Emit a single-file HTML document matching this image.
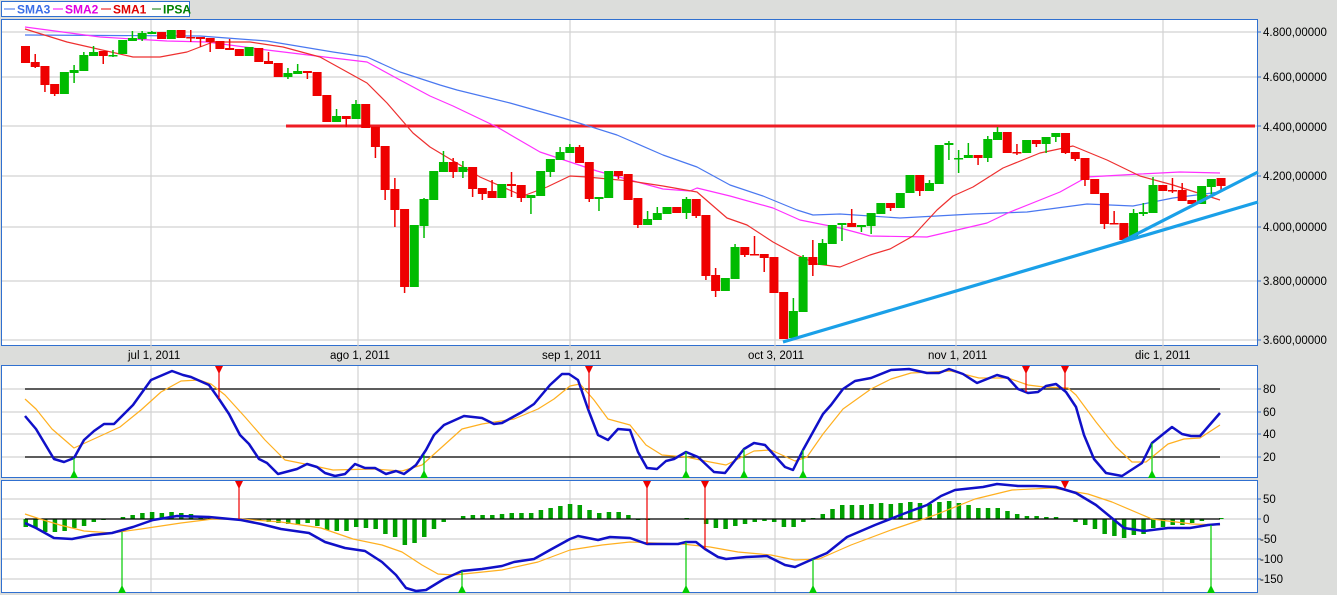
<!DOCTYPE html>
<html><head><meta charset="utf-8"><style>
html,body{margin:0;padding:0;background:#dcdddb;width:1337px;height:595px;overflow:hidden}
svg{display:block}
text{font-family:"Liberation Sans",sans-serif;font-size:11.5px;fill:#000}
.lg{font-weight:bold;font-size:12px}
</style></head><body>
<svg id="s" width="1337" height="595" xmlns="http://www.w3.org/2000/svg">
<rect x="0" y="0" width="1337" height="595" fill="#dcdddb"/>
<rect x="1.5" y="19.5" width="1256" height="326" fill="#fff" stroke="#3070d0"/>
<rect x="1.5" y="365.5" width="1256" height="112" fill="#fff" stroke="#3070d0"/>
<rect x="1.5" y="480.5" width="1256" height="112" fill="#fff" stroke="#3070d0"/>
<g id="grid" stroke="#d2d2d2" stroke-width="1.2"></g>
<g id="g1"></g>
<rect x="1.5" y="1.5" width="188" height="15" fill="#fff" stroke="#3070d0"/>
<line x1="4" y1="9" x2="15" y2="9" stroke="#3a6ee8"/><text x="17" y="13.5" class="lg" style="fill:#3a6ee8">SMA3</text>
<line x1="53" y1="9" x2="63" y2="9" stroke="#f0f"/><text x="65" y="13.5" class="lg" style="fill:#e000e0">SMA2</text>
<line x1="101" y1="9" x2="111" y2="9" stroke="#e00"/><text x="113" y="13.5" class="lg" style="fill:#e00000">SMA1</text>
<line x1="152" y1="9" x2="161" y2="9" stroke="#070"/><text x="163" y="13.5" class="lg" style="fill:#008000">IPSA</text>
<g>
<text x="1263" y="36">4.800,00000</text><text x="1263" y="81">4.600,00000</text>
<text x="1263" y="131">4.400,00000</text><text x="1263" y="180">4.200,00000</text>
<text x="1263" y="231">4.000,00000</text><text x="1263" y="285">3.800,00000</text>
<text x="1263" y="344">3.600,00000</text>
<text x="1263" y="393">80</text><text x="1263" y="416">60</text><text x="1263" y="438">40</text><text x="1263" y="461">20</text>
<text x="1263" y="503">50</text><text x="1263" y="523">0</text><text x="1260" y="543">-50</text><text x="1260" y="563">-100</text><text x="1260" y="583">-150</text>
<text x="128" y="359">jul 1, 2011</text><text x="330" y="359">ago 1, 2011</text><text x="542" y="359">sep 1, 2011</text>
<text x="748" y="359">oct 3, 2011</text><text x="928" y="359">nov 1, 2011</text><text x="1135" y="359">dic 1, 2011</text>
</g>
</svg>
<script>
var NS="http://www.w3.org/2000/svg",G=document.getElementById("g1"),GR=document.getElementById("grid");
function el(t,a,p){var e=document.createElementNS(NS,t);for(var k in a)e.setAttribute(k,a[k]);(p||G).appendChild(e);return e;}
function ln(x1,y1,x2,y2,c,w,p){el("line",{x1:x1,y1:y1,x2:x2,y2:y2,stroke:c,"stroke-width":w||1},p);}
function pl(pts,c,w){el("polyline",{points:pts.map(function(p){return p.join(",")}).join(" "),fill:"none",stroke:c,"stroke-width":w,"stroke-linejoin":"round"});}
[151,358,570,775,956,1163].forEach(function(x){ln(x,20,x,349,"#d2d2d2",1.2,GR);ln(x,366,x,477,"#d2d2d2",1.2,GR);ln(x,481,x,592,"#d2d2d2",1.2,GR);});
[32,77,126,176,227,281,340].forEach(function(y){ln(2,y,1257,y,"#d2d2d2",1.2,GR);ln(1257,y,1261,y,"#3070d0",1,GR);});
[389,412,434,457].forEach(function(y){ln(2,y,1257,y,"#d2d2d2",1.2,GR);ln(1257,y,1261,y,"#3070d0",1,GR);});
[499,519,539,559,579].forEach(function(y){ln(2,y,1257,y,"#d2d2d2",1.2,GR);ln(1257,y,1261,y,"#3070d0",1,GR);});
var C=[[0,46,63],[0,62,67,54,68],[0,66,85,66,92],[0,84,94,84,96],[1,72,94],[1,70,73,65,83],[1,55,71,52,71],[1,52,56,46,56],[0,51,56,51,64],[1,55,56,50,57],
[1,40,54],[1,38,41,31,41],[1,33,39,31,41],[1,32,34,31,34],[0,32,39],[1,30,39],[0,30,38],[0,37,38,30,42],[0,37,39,37,47],[0,38,42,38,52],
[0,41,49],[0,48,50,39,50],[0,49,56],[1,47,56],[0,48,62],[0,61,64,52,64],[0,63,77],[1,73,77,68,79],[1,71,74,64,74],[0,71,73,71,79],
[0,72,96],[0,95,122],[1,116,122,109,122],[0,116,119,116,127],[1,104,119,100,119],[0,104,128],[0,127,147,127,158],[0,146,190,146,200],[0,189,210,178,227],[0,209,287,209,293],
[1,225,287],[1,199,226,198,238],[1,171,200],[1,162,172,151,172],[0,162,172,158,178],[1,167,172,161,178],[0,167,189,167,197],[0,188,194,188,200],[0,191,198,180,198],[1,184,198],
[0,184,186,172,197],[0,185,198,185,202],[1,195,198,195,214],[1,171,196],[1,159,172,159,177],[1,152,160,147,160],[1,147,153,144,153],[0,147,163,145,163],[0,162,199,162,202],[1,197,199,197,211],
[1,171,198],[0,171,176,171,179],[0,174,200],[0,198,225,198,228],[1,219,225,211,225],[1,213,220,207,220],[1,207,214],[0,207,213],[1,199,213,197,219],[0,199,216,199,218],
[0,215,276,215,280],[0,275,291,268,297],[1,278,291],[1,247,279,244,279],[0,247,255,247,257],[0,254,255,236,255],[0,254,258,254,272],[0,257,293],[0,292,339],[1,311,338,298,338],
[1,257,312,255,312],[0,257,265,240,276],[1,243,265,239,265],[1,225,244],[1,223,225,223,241],[0,223,227,209,227],[1,225,227,225,232],[1,213,226,213,234],[1,203,214],[0,203,208,203,211],
[1,193,208],[1,175,193],[0,175,191,175,196],[1,183,191,180,191],[1,145,184],[1,143,145,141,160],[1,158,159,150,173],[1,155,158,143,158],[0,155,158,155,165],[1,139,158,136,162],
[1,132,140,127,140],[0,132,153],[0,152,153,144,155],[1,140,153],[0,140,144,140,147],[1,137,144,137,153],[1,133,137,133,142],[0,133,153,133,154],[0,152,159,152,161],[0,158,180,158,186],
[0,179,194],[0,193,224,193,229],[0,223,224,211,224],[0,223,240],[1,213,239,209,239],[1,212,214,203,216],[1,185,213,177,213],[0,185,191],[0,190,191,178,193],[0,190,201,183,201],
[0,200,204],[1,186,204],[1,179,187,179,196],[0,178,186,178,192]];
function cx(i){return 21+i*9.72;}
ln(286,126,1255,126,"#ee1c24",3);
pl([[25,35],[200,36],[267,41],[333,52],[367,57],[400,72],[440,85],[457,90],[510,103],[563,118],[617,135],[663,155],[697,167],[730,185],[763,196],[797,210],[813,215],[840,214],[900,218],[973,214],[1027,212],[1087,204],[1133,206],[1173,198],[1220,192]],"#4a78f0",1.2);
pl([[25,27],[100,37],[167,41],[207,42],[267,50],[333,58],[367,62],[400,80],[430,96],[453,106],[497,127],[540,152],[597,171],[630,180],[663,189],[690,191],[697,188],[730,196],[773,208],[800,220],[840,228],[870,236],[927,237],[987,223],[1010,212],[1060,192],[1087,177],[1140,174],[1180,172],[1220,173]],"#ff30ff",1.2);
pl([[25,29],[67,42],[133,57],[160,57],[187,52],[213,42],[250,42],[283,47],[320,57],[367,83],[387,103],[413,133],[430,147],[480,177],[523,196],[547,187],[570,176],[587,177],[630,181],[663,186],[697,192],[727,218],[747,225],[773,242],[797,255],[817,264],[840,267],[870,255],[890,249],[913,236],[937,210],[953,196],[973,187],[1003,168],[1040,153],[1073,146],[1107,160],[1140,176],[1173,185],[1220,200]],"#ee3030",1.2);
C.forEach(function(c,i){var x=cx(i),col=c[0]?"#00bb00":"#ee0000";var wt=c[3]||c[1],wb=c[4]||c[2];
 ln(x+4.5,wt,x+4.5,wb,col,1.5);el("rect",{x:x,y:c[1],width:9,height:Math.max(1.5,c[2]-c[1]),fill:col});});
ln(783,342,1258,202,"#1aa0e8",3.2);ln(1123,241,1258,172,"#1aa0e8",3.2);
ln(25,389,1220,389,"#000",1.3);ln(25,457,1220,457,"#000",1.3);
pl([[25,399],[36,409],[52,429],[74,448],[96,438],[120,427],[141,410],[161,392],[181,381],[199,380],[211,384],[225,395],[245,417],[265,440],[285,460],[305,464],[333,470],[373,469],[402,471],[422,465],[442,447],[462,429],[482,424],[514,419],[538,409],[554,399],[570,386],[580,384],[594,400],[608,419],[630,425],[646,445],[662,455],[686,457],[710,462],[726,465],[754,451],[771,450],[795,461],[807,457],[823,434],[843,409],[871,389],[891,379],[911,373],[951,371],[979,378],[1008,378],[1028,385],[1044,387],[1068,388],[1076,395],[1096,422],[1116,447],[1132,462],[1146,462],[1168,444],[1184,439],[1200,438],[1220,425]],"#ffb020",1.2);
pl([[25,416],[36,429],[54,459],[64,462],[74,458],[84,440],[94,431],[104,424],[114,424],[133,405],[151,380],[172,371],[183,375],[191,377],[209,385],[219,399],[229,414],[240,435],[249,444],[259,459],[267,463],[278,474],[297,469],[307,464],[317,467],[325,473],[335,476],[345,474],[355,464],[365,468],[375,468],[386,474],[396,471],[404,474],[416,465],[426,450],[434,435],[444,425],[464,416],[482,418],[494,424],[502,423],[522,412],[534,404],[550,385],[562,374],[569,374],[578,380],[588,409],[598,435],[608,440],[618,429],[630,430],[638,452],[647,468],[657,469],[666,461],[674,459],[686,452],[698,457],[714,472],[725,473],[744,449],[754,443],[765,445],[785,467],[793,470],[803,450],[823,414],[831,405],[843,389],[855,381],[871,378],[891,370],[909,369],[927,373],[939,373],[949,369],[963,374],[977,383],[997,375],[1008,378],[1018,389],[1028,393],[1038,392],[1046,386],[1056,384],[1066,392],[1076,407],[1084,435],[1094,459],[1106,473],[1122,476],[1142,463],[1152,443],[1172,427],[1182,434],[1191,436],[1200,436],[1220,413]],"#1010c8",2.5);
function dn(x,top,y){ln(x,top,x,y,"#ee0000",1.2);el("polygon",{points:(x-4)+","+top+" "+(x+4)+","+top+" "+x+","+(top+8),fill:"#ee0000"});}
function up(x,bot,y){ln(x,y,x,bot,"#00cc00",1.2);el("polygon",{points:(x-4)+","+bot+" "+(x+4)+","+bot+" "+x+","+(bot-8),fill:"#00cc00"});}
[[219,399],[589,409],[1026,392],[1065,389]].forEach(function(a){dn(a[0],366,a[1]);});
[[74,458],[424,455],[686,452],[744,449],[803,450],[1152,443]].forEach(function(a){up(a[0],478,a[1]);});
var H=[-8,-9,-13,-13,-12,-9,-7,-3,-1,0,2,4,6,7,6,7,6,5,3,2,1,0,0,-1,-1,-3,-4,-5,-6,-4,-7,-11,-12,-12,-8,-9,-10,-15,-18,-26,-24,-18,-10,-3,0,3,4,4,4,5,6,6,6,9,11,13,15,14,9,6,7,7,4,-1,-1,0,0,0,1,0,
-5,-9,-10,-7,-5,-3,-2,-3,-8,-8,-3,1,5,10,14,14,14,15,16,15,16,17,16,15,17,18,16,14,11,11,11,8,5,3,3,2,2,0,-3,-6,-10,-15,-17,-19,-16,-15,-9,-8,-6,-6,-4,-2,0,1];
H.forEach(function(v,i){if(!v)return;var x=cx(i)+2.5;el("rect",{x:x,y:v>0?519-v:519,width:4.5,height:Math.abs(v),fill:"#00a000"});});
ln(25,519,1220,519,"#000",1.3);
pl([[25,514],[40,519],[60,525],[84,531],[112,533],[141,529],[181,523],[213,519],[241,519],[281,522],[321,528],[353,539],[382,545],[402,552],[422,565],[438,574],[454,575],[502,570],[538,562],[570,550],[602,545],[630,542],[654,543],[682,544],[710,547],[738,552],[771,555],[795,560],[819,559],[851,545],[891,530],[935,515],[975,499],[1012,490],[1052,488],[1088,494],[1112,502],[1152,519],[1192,524],[1220,525]],"#ffb020",1.2);
pl([[25,523],[36,528],[54,538],[72,539],[92,535],[112,533],[133,527],[153,520],[177,516],[209,517],[241,520],[261,524],[281,529],[309,533],[325,542],[345,548],[365,551],[382,562],[396,575],[406,588],[416,591],[426,590],[444,579],[462,571],[482,569],[502,566],[514,562],[534,559],[550,550],[570,539],[578,536],[598,540],[610,537],[630,538],[647,544],[678,544],[686,542],[696,542],[705,549],[718,557],[726,559],[746,557],[767,556],[785,565],[795,567],[813,559],[827,553],[847,537],[875,525],[903,514],[927,505],[941,496],[955,490],[983,487],[997,484],[1018,486],[1036,486],[1056,487],[1076,493],[1096,505],[1124,528],[1144,531],[1168,528],[1190,528],[1208,525],[1220,524]],"#1010c8",2.5);
[[239,519],[647,544],[705,549],[1065,487]].forEach(function(a){dn(a[0],481,a[1]);});
[[122,532],[462,571],[686,542],[813,559],[1211,525]].forEach(function(a){up(a[0],593,a[1]);});
</script>
</body></html>
